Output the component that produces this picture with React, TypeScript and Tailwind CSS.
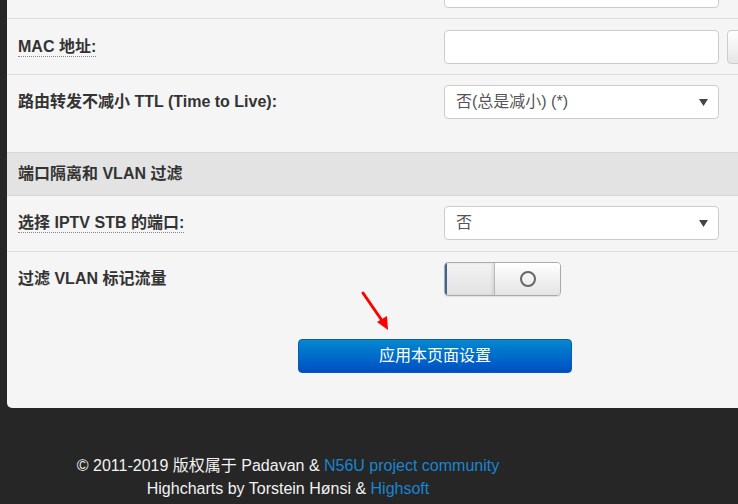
import React from "react";

const font = "font-['Liberation_Sans','Noto_Sans_CJK_SC',sans-serif]";

function Caret() {
  return (
    <svg width="9" height="7" viewBox="0 0 9 7" className="shrink-0">
      <polygon points="0,0 9,0 4.5,7" fill="#444" />
    </svg>
  );
}

function Select({ value }: { value: string }) {
  return (
    <div className="flex h-[34px] w-[275px] items-center justify-between rounded-[4px] border border-[#ccc] bg-white pl-[11px] pr-[10px] text-[16px] text-[#555]">
      <span>{value}</span>
      <Caret />
    </div>
  );
}

function Input() {
  return <div className="h-[34px] w-[275px] shrink-0 rounded-[4px] border border-[#ccc] bg-white" />;
}

function Label({ children, dotted }: { children: React.ReactNode; dotted?: boolean }) {
  return (
    <div className="w-[437px] shrink-0 pl-[11px]">
      <span
        className={
          "text-[16px] font-bold text-[#333] " +
          (dotted ? "border-b border-dotted border-[#888] pb-[1px]" : "")
        }
      >
        {children}
      </span>
    </div>
  );
}

export default function App() {
  return (
    <div className={`relative h-[504px] w-[738px] overflow-hidden bg-[#262626] ${font}`}>
      <div className="ml-[7px] flex h-[408px] flex-col overflow-hidden rounded-bl-[5px] bg-[#f5f5f5]">
        {/* partial top row */}
        <div className="flex h-[19px] shrink-0 items-end border-b border-[#ddd] pb-[10px]">
          <div className="w-[437px] shrink-0" />
          <Input />
        </div>

        {/* MAC */}
        <div className="flex shrink-0 items-center border-b border-[#ddd] pb-[10px] pt-[11px]">
          <Label dotted>MAC 地址:</Label>
          <Input />
          <div className="ml-[8px] h-[34px] w-[60px] shrink-0 rounded-[4px] border border-[#ccc] bg-gradient-to-b from-white to-[#e6e6e6]" />
        </div>

        {/* TTL */}
        <div className="flex shrink-0 items-start pb-[33px] pt-[10px]">
          <div className="flex h-[34px] items-center">
            <Label>路由转发不减小 TTL (Time to Live):</Label>
          </div>
          <Select value="否(总是减小) (*)" />
        </div>

        {/* section header */}
        <div className="flex h-[44px] shrink-0 items-center border-y border-[#d6d6d6] bg-[#e3e3e3] pl-[11px] text-[16px] font-bold text-[#333]">
          端口隔离和 VLAN 过滤
        </div>

        {/* IPTV */}
        <div className="flex shrink-0 items-center border-b border-[#ddd] pb-[11px] pt-[10px]">
          <Label dotted>选择 IPTV STB 的端口:</Label>
          <Select value="否" />
        </div>

        {/* VLAN */}
        <div className="flex shrink-0 items-center pb-[10px] pt-[10px]">
          <Label>过滤 VLAN 标记流量</Label>
          <div className="flex h-[34px] w-[117px] overflow-hidden rounded-[4px] border border-[#aaa] shadow-[0_1px_1px_rgba(0,0,0,0.08)]">
            <div className="h-full w-[50px] border-l-2 border-r border-l-[#3d6591] border-r-[#b8b8b8] bg-gradient-to-b from-[#f2f2f2] to-[#e2e2e2] shadow-[inset_-2px_0_3px_rgba(0,0,0,0.08)]" />
            <div className="flex flex-1 items-center justify-center bg-gradient-to-b from-white to-[#e4e4e4]">
              <div className="h-[16px] w-[16px] rounded-full border-2 border-[#666]" />
            </div>
          </div>
        </div>

        {/* apply button */}
        <div className="mt-[33px] flex shrink-0 pl-[291px]">
          <div className="flex h-[34px] w-[274px] items-center justify-center rounded-[4px] border border-[#0a5bb0] bg-gradient-to-b from-[#0a88cf] to-[#004ec3] text-[16px] text-white">
            应用本页面设置
          </div>
        </div>
      </div>

      {/* footer */}
      <div className="w-[576px] pt-[46px] text-center text-[16px] leading-[23px] text-[#f2f2f2]">
        <div>
          © 2011-2019 版权属于 Padavan &amp; <span className="text-[#1a85d0]">N56U project community</span>
        </div>
        <div>
          Highcharts by Torstein Hønsi &amp; <span className="text-[#1a85d0]">Highsoft</span>
        </div>
      </div>

      {/* red arrow annotation */}
      <svg className="absolute left-[355px] top-[285px]" width="45" height="52" viewBox="0 0 45 52">
        <line x1="8" y1="8" x2="28" y2="37" stroke="#ff0000" strokeWidth="3" strokeLinecap="round" />
        <polygon points="22,37 33,45 32,31" fill="#ff0000" />
      </svg>
    </div>
  );
}
